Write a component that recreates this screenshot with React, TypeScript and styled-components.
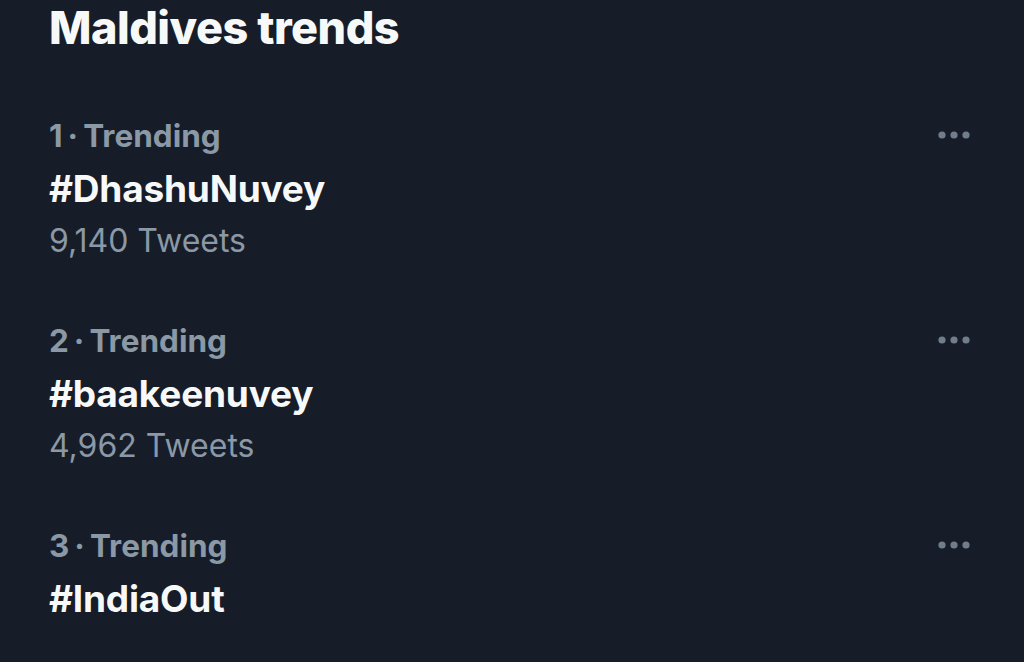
import styled, { createGlobalStyle } from "styled-components";

const GlobalStyle = createGlobalStyle`
  html, body {
    margin: 0;
    padding: 0;
    background: #161d29;
  }
  body {
    font-family: Inter, "Noto Sans", "Liberation Sans", sans-serif;
    -webkit-font-smoothing: antialiased;
  }
`;

const trends = [
  { rank: 1, name: "#DhashuNuvey", tweets: "9,140 Tweets" },
  { rank: 2, name: "#baakeenuvey", tweets: "4,962 Tweets" },
  { rank: 3, name: "#IndiaOut" },
];

function MoreIcon() {
  return (
    <svg width="36" height="10" viewBox="0 0 36 10" aria-hidden="true">
      <circle cx="6" cy="5" r="3.6" fill="currentColor" />
      <circle cx="18" cy="5" r="3.6" fill="currentColor" />
      <circle cx="30" cy="5" r="3.6" fill="currentColor" />
    </svg>
  );
}

function App() {
  return (
    <>
      <GlobalStyle />
      <Page>
        <Title>Maldives trends</Title>
        <List>
          {trends.map((t) => (
            <Row key={t.rank}>
              <MetaLine>
                <Meta>
                  {t.rank}
                  <Dot>·</Dot>Trending
                </Meta>
                <MoreButton aria-label="More">
                  <MoreIcon />
                </MoreButton>
              </MetaLine>
              <Name>{t.name}</Name>
              {t.tweets && <Count>{t.tweets}</Count>}
            </Row>
          ))}
        </List>
      </Page>
    </>
  );
}

export default App;

const Page = styled.div`
  height: 662px;
  overflow: hidden;
  padding: 0 52px 0 49px;
  background: #161d29;
  color: #f7f9f9;
`;

const Title = styled.h1`
  margin: 0;
  font-size: 45px;
  line-height: 56px;
  font-weight: 800;
  letter-spacing: -0.5px;
  color: #f7f9f9;
`;

const List = styled.div`
  margin-top: 60px;
  display: flex;
  flex-direction: column;
`;

const Row = styled.div`
  height: 205px;
  display: flex;
  flex-direction: column;
`;

const MetaLine = styled.div`
  display: flex;
  justify-content: space-between;
  align-items: center;
`;

const Meta = styled.span`
  font-size: 31.5px;
  line-height: 40px;
  font-weight: 700;
  letter-spacing: 0;
  color: #8b98a5;
`;

const Dot = styled.span`
  margin: 0 5px;
`;

const MoreButton = styled.button`
  border: none;
  background: none;
  padding: 0;
  margin-top: -2px;
  display: flex;
  color: #717d8b;
`;

const Name = styled.div`
  margin-top: 11px;
  font-size: 37px;
  line-height: 44px;
  font-weight: 700;
  letter-spacing: -0.2px;
  color: #f7f9f9;
`;

const Count = styled.div`
  margin-top: 10px;
  font-size: 32px;
  line-height: 40px;
  font-weight: 400;
  color: #8b98a5;
`;
